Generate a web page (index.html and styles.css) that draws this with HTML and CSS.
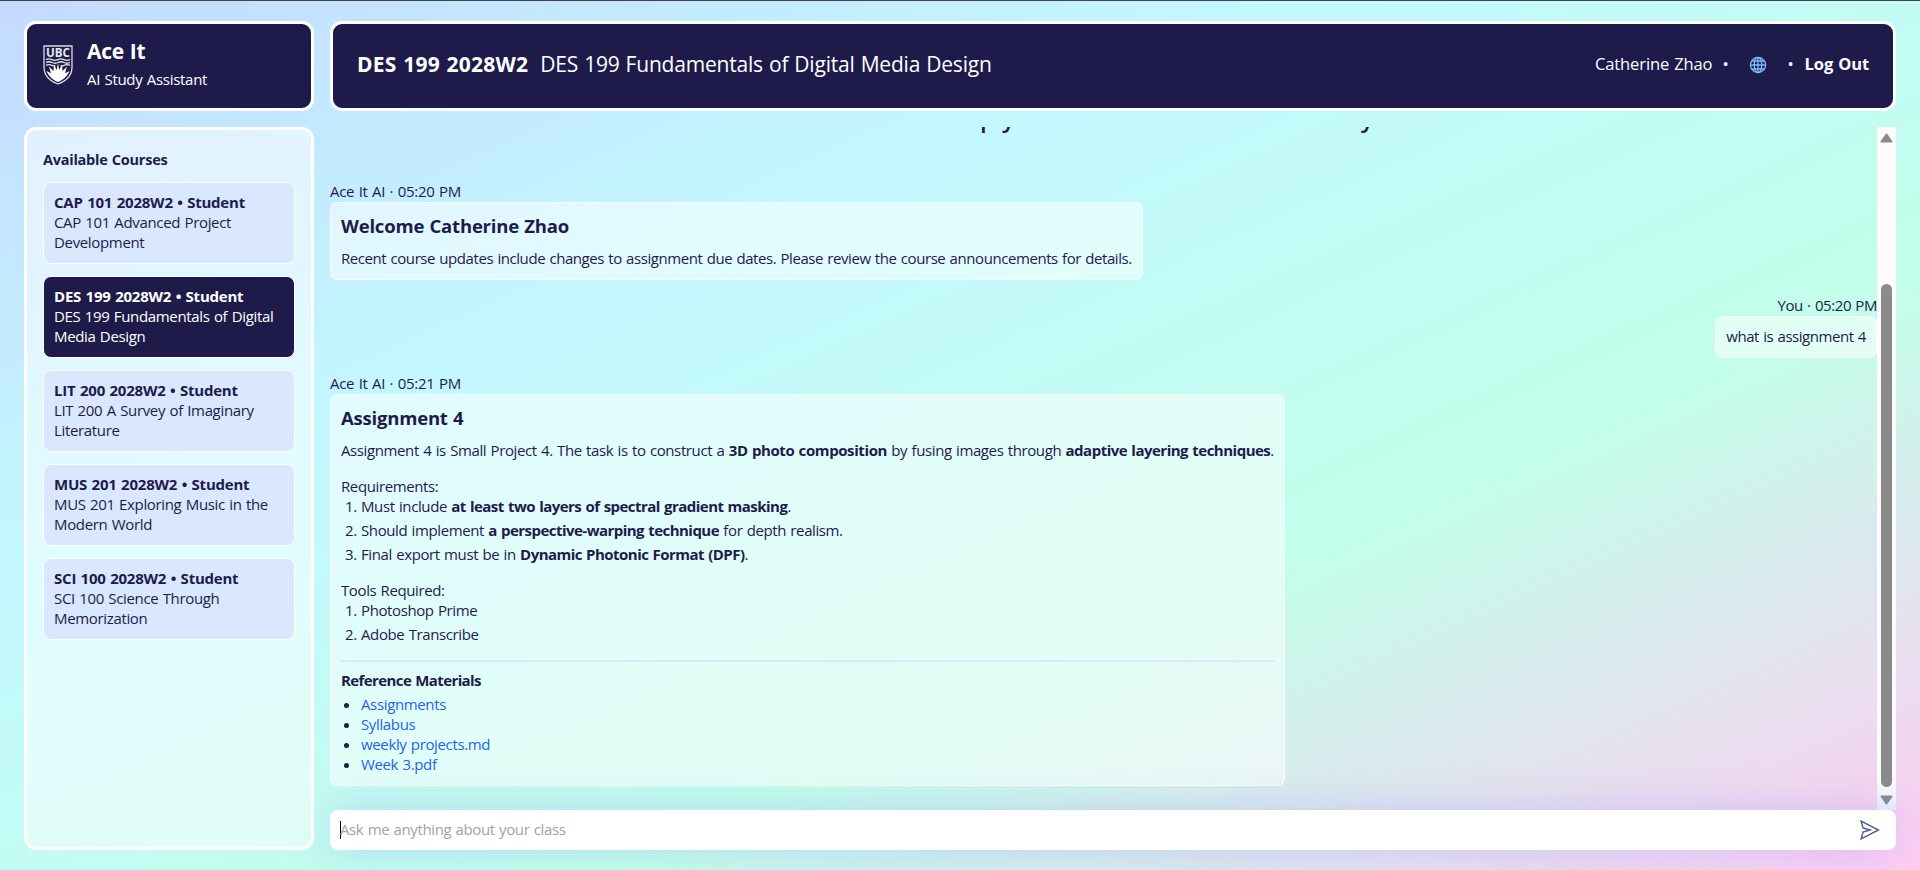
FILE: index.html
```html
<!DOCTYPE html>
<html lang="en">
<head>
<meta charset="utf-8">
<title>Ace It</title>
<link rel="stylesheet" href="styles.css">
</head>
<body>
<div class="app">
  <div class="sidebar">
    <div class="brand">
      <svg class="crest" viewBox="0 0 30 40" fill="none">
        <path d="M1 1H29V22C29 31 23 36 15 39C7 36 1 31 1 22Z" stroke="#d9dbe6" stroke-width="1.3"/>
        <text class="crest-text" x="15" y="12" text-anchor="middle" textLength="24" lengthAdjust="spacingAndGlyphs">UBC</text>
        <path d="M3 14.700q3-1.500 6 0t6 0t6 0t6 0M3 17.500q3-1.500 6 0t6 0t6 0t6 0M3 20.300q3-1.500 6 0t3 0M27 20.300q-3-1.500-6 0t-3 0" stroke="#e4e6ee" stroke-width="1.300"/>
        <path d="M15 37C10 35 5.500 31 3.500 26L8 28.200L6 21.500L10.500 26L11 19.500L13.800 25L15 18L16.200 25L19 19.500L19.500 26L24 21.500L22 28.200L26.500 26C24.500 31 20 35 15 37Z" fill="#fff"/>
      </svg>
      <div>
        <h1 class="brand-name">Ace It</h1>
        <p class="brand-sub">AI Study Assistant</p>
      </div>
    </div>
    <nav class="courses">
      <h2 class="courses-title">Available Courses</h2>
      <a class="course"><b>CAP 101 2028W2 • Student</b><span>CAP 101 Advanced Project<br>Development</span></a>
      <a class="course active"><b>DES 199 2028W2 • Student</b><span>DES 199 Fundamentals of Digital<br>Media Design</span></a>
      <a class="course"><b>LIT 200 2028W2 • Student</b><span>LIT 200 A Survey of Imaginary<br>Literature</span></a>
      <a class="course"><b>MUS 201 2028W2 • Student</b><span>MUS 201 Exploring Music in the<br>Modern World</span></a>
      <a class="course"><b>SCI 100 2028W2 • Student</b><span>SCI 100 Science Through<br>Memorization</span></a>
    </nav>
  </div>
  <main class="main">
    <header class="topbar">
      <div class="course-heading"><b class="code">DES 199 2028W2</b><span class="title">DES 199 Fundamentals of Digital Media Design</span></div>
      <div class="account">
        <span class="user">Catherine Zhao</span><span class="dot">•</span>
        <svg class="globe" viewBox="0 0 18 18" fill="none" stroke="#7fbcf5" stroke-width="1.300"><circle cx="9" cy="9" r="7.600"/><ellipse cx="9" cy="9" rx="3.800" ry="7.600"/><path d="M9 1.400V16.600M1.400 9H16.600M2.500 5H15.500M2.500 13H15.500"/></svg>
        <span class="dot">•</span><b class="logout">Log Out</b>
      </div>
    </header>
    <div class="chat">
      <div class="messages">
        <h2 class="greeting">How can I help you with DES 199 2028W2 today?</h2>
        <div class="message">
          <div class="meta">Ace It AI · 05:20 PM</div>
          <div class="bubble">
            <h3 class="bubble-title">Welcome Catherine Zhao</h3>
            <p class="line recent">Recent course updates include changes to assignment due dates. Please review the course announcements for details.</p>
          </div>
        </div>
        <div class="message own">
          <div class="meta">You · 05:20 PM</div>
          <div class="bubble"><p class="line question">what is assignment 4</p></div>
        </div>
        <div class="message">
          <div class="meta">Ace It AI · 05:21 PM</div>
          <div class="bubble answer">
            <h3 class="bubble-title">Assignment 4</h3>
            <p class="line">Assignment 4 is Small Project 4. The task is to construct a <b>3D photo composition</b> by fusing images through <b class="last">adaptive layering techniques</b>.</p>
            <p class="line section">Requirements:</p>
            <ol class="steps">
              <li>Must include <b>at least two layers of spectral gradient masking</b>.</li>
              <li>Should implement <b>a perspective-warping technique</b> for depth realism.</li>
              <li>Final export must be in <b>Dynamic Photonic Format (DPF)</b>.</li>
            </ol>
            <p class="line section">Tools Required:</p>
            <ol class="steps">
              <li>Photoshop Prime</li>
              <li>Adobe Transcribe</li>
            </ol>
            <div class="references">
              <h4 class="references-title">Reference Materials</h4>
              <ul class="links">
                <li><a>Assignments</a></li>
                <li><a>Syllabus</a></li>
                <li><a>weekly projects.md</a></li>
                <li><a>Week 3.pdf</a></li>
              </ul>
            </div>
          </div>
        </div>
      </div>
      <div class="scrollbar">
        <svg class="arrow" viewBox="0 0 13 10"><path d="M6.500 1.500L11.500 8.500H1.500Z" fill="#8b8b8b" stroke="#8b8b8b" stroke-width="2" stroke-linejoin="round"/></svg>
        <div class="track"><div class="thumb"></div></div>
        <svg class="arrow" viewBox="0 0 13 10"><path d="M6.500 8.500L11.500 1.500H1.500Z" fill="#8b8b8b" stroke="#8b8b8b" stroke-width="2" stroke-linejoin="round"/></svg>
      </div>
    </div>
    <div class="composer">
      <span class="caret"></span><span class="placeholder">Ask me anything about your class</span>
      <svg class="send" viewBox="0 0 20 20" fill="none" stroke="#48618f" stroke-width="1.500"><path d="M1.200 1.200L18.500 10L1.200 18.800L3 12L10 10L3 8Z"/></svg>
    </div>
  </main>
</div>
</body>
</html>
```
FILE: styles.css
```css
* { box-sizing: border-box; }
body, h1, h2, h3, h4, p, ol, ul { margin: 0; padding: 0; }
body {
  height: 870px;
  overflow: hidden;
  font: 15px/20px "Open Sans", "Noto Sans", sans-serif;
  letter-spacing: -0.3px;
  word-spacing: 0.8px;
  color: #1e1b4b;
  background: linear-gradient(to bottom right, #c4daff 0%, #c3f8ff 33%, #c2fee9 66%, #ffccf2 100%);
}
b, h1, h2, h3, h4 { font-weight: 700; }
.app {
  display: flex;
  gap: 16px;
  height: 870px;
  padding: 20px 24px;
  border-top: 1px solid #444;
}
.sidebar { display: flex; flex-direction: column; gap: 16px; width: 290px; flex: none; }
.brand, .topbar {
  display: flex;
  align-items: center;
  height: 90px;
  flex: none;
  color: #fff;
  background: #1e1b4b;
  border: 3px solid #fff;
  border-radius: 12px;
}
.brand { padding: 0 16px; gap: 14px; }
.crest { width: 30px; height: 40px; margin-top: -2px; }
.crest-text { font: 700 12px "Open Sans", sans-serif; fill: #e8e9f0; letter-spacing: 0; }
.brand-name { font-size: 21px; line-height: 28px; letter-spacing: -0.3px; margin-top: -1px; }
.brand-sub { line-height: 20px; margin: 4px 0 5px; }
.courses {
  flex: 1;
  padding: 20px 16px;
  background: rgba(255, 255, 255, .5);
  border: 3px solid #fff;
  border-radius: 12px;
}
.courses-title { font-size: 14.500px; line-height: 24px; margin-bottom: 10px; margin-top: -2px; letter-spacing: -0.25px; }
.course {
  display: block;
  height: 82px;
  padding: 9px 10px 11px;
  margin-bottom: 12px;
  background: #d9e7ff;
  border: 1px solid #fff;
  border-radius: 8px;
}
.course b, .course span { display: block; }
.course b { letter-spacing: -0.22px; }
.course span { letter-spacing: -0.34px; }
.course.active { background: #1e1b4b; color: #fff; }
.main { display: flex; flex-direction: column; flex: 1; min-width: 0; }
.topbar { justify-content: space-between; padding: 0 24px 4px; }
.course-heading { display: flex; gap: 12px; font-size: 21px; }
.code { letter-spacing: 0.25px; }
.title { letter-spacing: -0.2px; }
.account { display: flex; align-items: center; font-size: 16.500px; letter-spacing: -0.1px; }
.dot { margin-left: 10px; }
.globe { width: 18px; height: 18px; margin: 2px 11px 0 20px; }
.logout { margin-left: 11px; }
.chat { display: flex; height: 683px; margin-top: 16px; overflow: hidden; }
.messages { flex: 1; overflow: hidden; }
.greeting { font-size: 24px; line-height: 32px; margin-top: -25px; text-align: center; font-weight: 600; letter-spacing: 0; }
.message { display: flex; flex-direction: column; align-items: flex-start; margin-bottom: 16px; }
.greeting + .message { margin-top: 48px; }
.own { align-items: flex-end; }
.meta { height: 20px; line-height: 18px; letter-spacing: -0.28px; }
.own .meta { letter-spacing: -0.42px; }
.bubble {
  padding: 9px 10px 11px;
  border: 1px solid rgba(255, 255, 255, .9);
  border-radius: 8px;
  background: rgba(255, 255, 255, .5);
}
.bubble-title { font-size: 18.500px; line-height: 28px; margin-bottom: 8px; letter-spacing: -0.2px; }
.line, .steps { letter-spacing: -0.39px; }
.line b { letter-spacing: -0.4px; }
.line .last { letter-spacing: -0.5px; }
.steps b { letter-spacing: -0.53px; }
.recent { letter-spacing: -0.43px; }
.question { letter-spacing: -0.45px; }
.section { margin-top: 16px; }
.steps, .links { padding-left: 20px; }
.steps li { margin-bottom: 4px; }
.references { margin-top: 16px; padding-top: 8px; border-top: 2px solid #dbe7ff; }
.references-title { font-size: 15px; margin-bottom: 4px; letter-spacing: -0.6px; }
.links a { color: #2563eb; letter-spacing: -0.36px; }
.scrollbar { display: flex; flex-direction: column; align-items: center; width: 19px; padding: 6px 0 5px; background: linear-gradient(#fcfcfc 96%, #eaf0fb); }
.arrow { width: 13px; height: 10px; flex: none; }
.track { flex: 1; width: 11px; padding-top: 141px; }
.thumb { height: 503px; border-radius: 6px; background: #8b8b8b; }
.composer {
  display: flex;
  align-items: center;
  height: 40px;
  padding: 0 16px 0 10px;
  background: #fff;
  border-radius: 8px;
  box-shadow: 0 0 40px rgba(130, 140, 255, .3);
}
.caret { width: 1px; height: 18px; background: #000; }
.placeholder { flex: 1; padding-bottom: 2px; color: #9ca3af; margin-left: -1px; letter-spacing: -0.38px; }
.send { width: 20px; height: 20px; }
```
